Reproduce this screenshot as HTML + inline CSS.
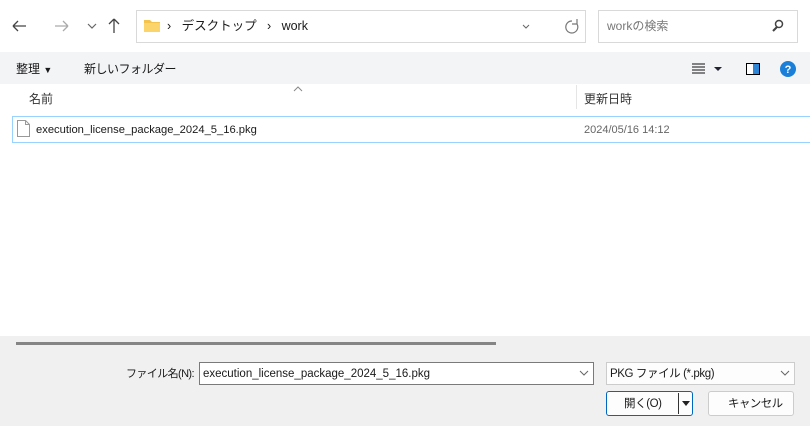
<!DOCTYPE html>
<html><head><meta charset="utf-8"><style>
*{box-sizing:border-box;margin:0;padding:0}
body{width:810px;height:426px;background:#fff;font-family:"Liberation Sans","Noto Sans CJK JP",sans-serif;font-size:12px;line-height:1;color:#1a1a1a;position:relative;overflow:hidden}
.a{position:absolute;white-space:nowrap}
</style></head><body>
<svg class="a" style="left:10px;top:16px" width="120" height="20">
<path d="M3 10h13M3 10l5-5M3 10l5 5" stroke="#444" stroke-width="1.3" fill="none"/>
<path d="M45 10h13M58 10l-5-5M58 10l-5 5" stroke="#aaa" stroke-width="1.3" fill="none"/>
<path d="M78 8l4 4 4-4" stroke="#666" stroke-width="1.2" fill="none"/>
<path d="M104 3v14M104 3l-5 5M104 3l5 5" stroke="#444" stroke-width="1.3" fill="none"/>
</svg>
<div class="a" style="left:136px;top:10px;width:450px;height:33px;border:1px solid #d9d9d9"></div>
<svg class="a" style="left:144px;top:18px" width="16" height="14"><path d="M0 2h6l2 2h8v10H0z" fill="#f3c34b"/><path d="M0 5h16v9H0z" fill="#fbd56b"/></svg>
<div class="a" style="left:167px;top:20px;font-size:12.5px">›&nbsp;&nbsp; デスクトップ&nbsp;&nbsp; ›&nbsp;&nbsp; work</div>
<svg class="a" style="left:520px;top:18px" width="60" height="16"><path d="M3 7l3 3 3-3" stroke="#666" fill="none"/><path d="M52 3a6 6 0 1 0 5 3M57 1v5h-5" stroke="#777" stroke-width="1.2" fill="none"/></svg>
<div class="a" style="left:598px;top:10px;width:200px;height:33px;border:1px solid #d9d9d9"></div>
<div class="a" style="left:607px;top:20px;color:#777;font-size:12px">workの検索</div>
<svg class="a" style="left:771px;top:19px" width="14" height="14"><circle cx="8" cy="5" r="3.5" stroke="#444" stroke-width="1.5" fill="none"/><path d="M6 8l-4 4" stroke="#444" stroke-width="2"/></svg>
<div class="a" style="left:0;top:52px;width:810px;height:32px;background:#f3f4f6"></div>
<div class="a" style="left:16px;top:63px;font-size:12px">整理 <span style="font-size:9px">▼</span></div>
<div class="a" style="left:84px;top:63px;font-size:12px;letter-spacing:-0.5px">新しいフォルダー</div>
<svg class="a" style="left:690px;top:60px;" width="110" height="18">
<path d="M2 4h13M2 7h13M2 10h13M2 13h13" stroke="#111"/>
<path d="M24 7h8l-4 4z" fill="#223"/>
<rect x="56.5" y="3.5" width="13" height="11" fill="#fff" stroke="#000"/><rect x="63" y="4" width="6" height="10" fill="#2f86d6"/>
<circle cx="98" cy="9" r="8" fill="#1a7fd8"/><text x="98" y="13" font-size="11" font-weight="bold" fill="#fff" text-anchor="middle" font-family="Liberation Sans">?</text>
</svg>
<svg class="a" style="left:293px;top:86px" width="10" height="6"><path d="M1 5l4-4 4 4" stroke="#888" fill="none"/></svg>
<div class="a" style="left:29px;top:93px;color:#333;font-size:12px">名前</div>
<div class="a" style="left:576px;top:85px;width:1px;height:24px;background:#e5e5e5"></div>
<div class="a" style="left:584px;top:93px;color:#333;font-size:12px">更新日時</div>
<div class="a" style="left:12px;top:116px;width:800px;height:27px;border:1px solid #99d1ff;border-right:none;"></div>
<svg class="a" style="left:17px;top:120px" width="13" height="17"><path d="M.5 .5h8l4 4v12H.5z" fill="#fff" stroke="#999"/><path d="M8.5 .5v4h4" fill="none" stroke="#999"/></svg>
<div class="a" style="left:36px;top:125px;font-size:11.2px">execution_license_package_2024_5_16.pkg</div>
<div class="a" style="left:584px;top:125px;color:#666;font-size:11px">2024/05/16 14:12</div>
<div class="a" style="left:0;top:336px;width:810px;height:90px;background:#f0f0f0"></div>
<div class="a" style="left:16px;top:342px;width:480px;height:3px;background:#858585"></div>
<div class="a" style="left:126px;top:369px;font-size:11px;letter-spacing:-0.6px">ファイル名(N):</div>
<div class="a" style="left:199px;top:362px;width:395px;height:23px;background:#fff;border:1px solid #7a7a7a"></div>
<div class="a" style="left:203px;top:369px;font-size:11.5px">execution_license_package_2024_5_16.pkg</div>
<svg class="a" style="left:579px;top:368px" width="10" height="10"><path d="M1 3l4 4 4-4" stroke="#666" fill="none"/></svg>
<div class="a" style="left:606px;top:362px;width:189px;height:23px;background:#fdfdfd;border:1px solid #ccc"></div>
<div class="a" style="left:610px;top:369px;font-size:11.5px;letter-spacing:-0.4px">PKG ファイル (*.pkg)</div>
<svg class="a" style="left:780px;top:368px" width="10" height="10"><path d="M1 3l4 4 4-4" stroke="#666" fill="none"/></svg>
<div class="a" style="left:606px;top:391px;width:87px;height:25px;background:#fdfdfd;border:1px solid #0067c0;border-radius:3px"></div>
<div class="a" style="left:624px;top:399px;font-size:11.5px;letter-spacing:-0.4px">開く(O)</div>
<div class="a" style="left:678px;top:393px;width:1px;height:21px;background:#333"></div>
<svg class="a" style="left:681px;top:400px" width="10" height="8"><path d="M1 1h8l-4 5z" fill="#222"/></svg>
<div class="a" style="left:708px;top:391px;width:86px;height:25px;background:#fdfdfd;border:1px solid #ccc;border-radius:3px"></div>
<div class="a" style="left:728px;top:399px;font-size:11.5px;letter-spacing:-0.6px">キャンセル</div>
</body></html>
